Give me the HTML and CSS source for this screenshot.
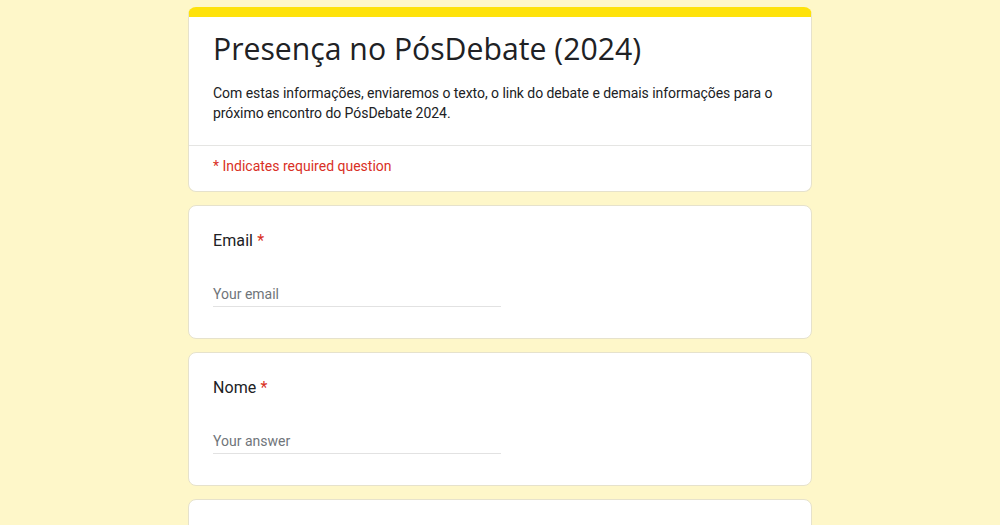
FILE: index.html
```html
<!DOCTYPE html>
<html lang="pt">
<head>
<meta charset="utf-8">
<title>Presença no PósDebate (2024)</title>
<link rel="stylesheet" href="styles.css">
</head>
<body>
<main class="form">
  <section class="card header-card">
    <div class="header-main">
      <h1 class="title">Presença no PósDebate (2024)</h1>
      <p class="desc">Com estas informações, enviaremos o texto, o link do debate e demais informações para o próximo encontro do PósDebate 2024.</p>
    </div>
    <div class="header-foot">
      <span class="required-note">* Indicates required question</span>
    </div>
  </section>

  <section class="card question">
    <div class="label">Email <span class="star">*</span></div>
    <div class="input"><span class="placeholder">Your email</span></div>
  </section>

  <section class="card question">
    <div class="label">Nome <span class="star">*</span></div>
    <div class="input"><span class="placeholder">Your answer</span></div>
  </section>

  <section class="card card-next"></section>
</main>
</body>
</html>
```

FILE: styles.css
```css
html, body {
  margin: 0;
  padding: 0;
  background: #fef7c9;
}

body {
  font-family: Roboto, "Liberation Sans", Arial, sans-serif;
  color: #202124;
  overflow: hidden;
  height: 525px;
}

.form {
  width: 624px;
  margin: 0 auto;
  padding-top: 7px;
  display: flex;
  flex-direction: column;
  gap: 13px;
}

.card {
  box-sizing: border-box;
  background: #ffffff;
  border: 1px solid #e6e2cc;
  border-radius: 8px;
}

.header-card {
  border-top: 10px solid #fee20a;
}

.header-main {
  padding: 12px 24px 22px 24px;
  border-bottom: 1px solid #e5e5e3;
}

.title {
  margin: 0;
  font-family: "Open Sans", Roboto, sans-serif;
  font-weight: 400;
  font-size: 30.2px;
  line-height: 40px;
  color: #202124;
}

.desc {
  margin: 14px 0 0 0;
  font-size: 14px;
  line-height: 20px;
  letter-spacing: -0.05px;
  color: #202124;
}

.header-foot {
  padding: 10px 24px 15px 24px;
}

.required-note {
  font-size: 14px;
  line-height: 20px;
  color: #d93025;
}

.question {
  padding: 23px 24px 31px 24px;
}

.label {
  font-size: 16px;
  line-height: 24px;
  letter-spacing: 0.1px;
  color: #202124;
}

.star {
  color: #d93025;
}

.input {
  margin-top: 31px;
  width: 288px;
  padding-bottom: 2px;
  border-bottom: 1px solid #e2e2e2;
  line-height: 20px;
}

.placeholder {
  font-size: 14px;
  color: #70757a;
}

.card-next {
  height: 80px;
  flex-shrink: 0;
}
```
